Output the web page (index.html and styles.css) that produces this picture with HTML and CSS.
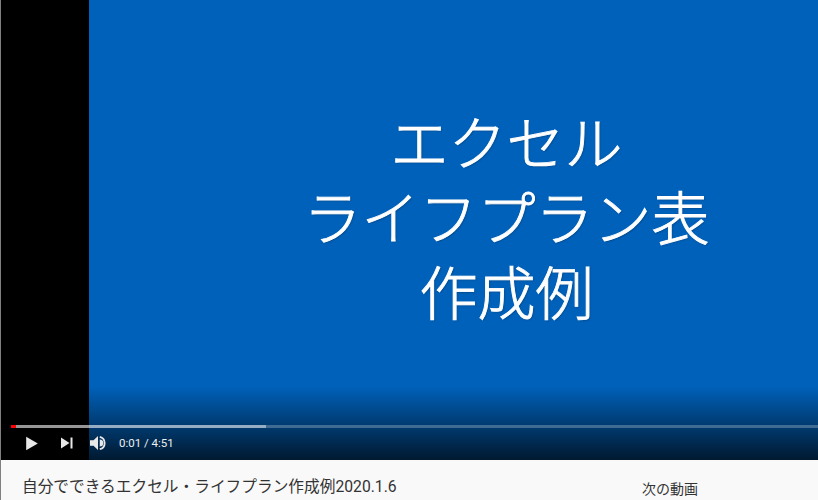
FILE: index.html
```html
<!DOCTYPE html>
<html lang="ja">
<head>
<meta charset="UTF-8">
<meta name="viewport" content="width=device-width, initial-scale=1.0">
<title>自分でできるエクセル・ライフプラン作成例2020.1.6</title>
<link rel="stylesheet" href="styles.css">
</head>
<body>
<div class="player">
    <div class="pillar"></div>
    <div class="slide">
        <p class="slide-text">エクセル<br>ライフプラン表<br>作成例</p>
    </div>

    <!-- controls lie over the video -->
    <div class="controls">
        <div class="progress">
            <div class="progress-loaded"></div>
            <div class="progress-played"></div>
        </div>
        <div class="buttons">
            <svg class="icon-play" viewBox="0 0 16 18"><path d="M1 1 L15 9 L1 17 Z"/></svg>
            <svg class="icon-next" viewBox="0 0 14 12"><path d="M1 0.5 L9.5 6 L1 11.5 Z"/><rect x="10.5" y="0.5" width="2" height="11"/></svg>
            <svg class="icon-volume" viewBox="0 0 18 18"><path d="M0 6 H4 L9 1 V17 L4 12 H0 Z"/><path d="M11 5 A4 4 0 0 1 11 13 Z"/><path class="wave" d="M11 2 A7.2 7.2 0 0 1 11 16"/></svg>
            <span class="time">0:01 / 4:51</span>
        </div>
    </div>
</div>

<div class="info">
    <h1 class="title">自分でできるエクセル・ライフプラン作成例2020.1.6</h1>
    <h2 class="next-title">次の動画</h2>
</div>
</body>
</html>
```

FILE: styles.css
```css
:root {
    /* colors */
    --slide-blue: #0061ba;
    --page: #f9f9f9;
    --text: #333;
    /* fonts */
    --ui: Roboto, "Noto Sans CJK JP", sans-serif;
}

html, body {
    height: 100%;
}

body {
    margin: 0;
    height: 500px;
    overflow: hidden;
    border-left: 1px solid #808080;
    background-color: var(--page);
    font-family: var(--ui);
    color: var(--text);
}

.player {
    position: relative;
    display: flex;
    height: 460px;
}

.pillar {
    width: 88px;
    background-color: #000;
}

.slide {
    flex: 1;
    display: flex;
    justify-content: center;
    padding-top: 103px;
    padding-left: 106px;
    background-color: var(--slide-blue);
}

.slide-text {
    margin: 0;
    font-family: "Noto Sans CJK JP", sans-serif;
    font-size: 58px;
    font-weight: 300;
    line-height: 75px;
    text-align: center;
    color: #fff;
    -webkit-text-stroke: 0.9px #fff;
    text-shadow: 1px 1px 2px rgba(0, 0, 0, 0.25);
}

.controls {
    position: absolute;
    left: 0;
    right: 0;
    bottom: 0;
    height: 74px;
    padding: 0 0 2px 10px;
    box-sizing: border-box;
    display: flex;
    flex-direction: column;
    justify-content: flex-end;
    background: linear-gradient(to bottom, rgba(0, 0, 0, 0), rgba(0, 0, 0, 0.74));
}

.progress {
    position: relative;
    height: 3px;
    background-color: rgba(255, 255, 255, 0.25);
}

.progress-loaded {
    position: absolute;
    left: 0;
    top: 0;
    bottom: 0;
    width: 255px;
    background-color: rgba(255, 255, 255, 0.45);
}

.progress-played {
    position: absolute;
    left: 0;
    top: 0;
    bottom: 0;
    width: 5px;
    background-color: #f00;
}

.buttons {
    display: flex;
    align-items: center;
    height: 30px;
    fill: #e8e8e8;
}

.icon-play {
    width: 14px;
    height: 15px;
    margin-left: 14px;
}

.icon-next {
    width: 14px;
    height: 12px;
    margin-left: 21px;
}

.icon-volume {
    width: 16px;
    height: 16px;
    margin-left: 16px;
}

.wave {
    fill: none;
    stroke: #e8e8e8;
    stroke-width: 2;
}

.time {
    margin-left: 13px;
    font-size: 11.5px;
    color: #eee;
}

.info {
    display: flex;
    justify-content: space-between;
    height: 40px;
}

.title {
    margin: 17px 0 0 21px;
    font-size: 15.7px;
    font-weight: 400;
    line-height: 20px;
}

.next-title {
    width: 176px;
    margin: 19px 0 0;
    font-size: 14px;
    font-weight: 400;
    line-height: 20px;
}
```
